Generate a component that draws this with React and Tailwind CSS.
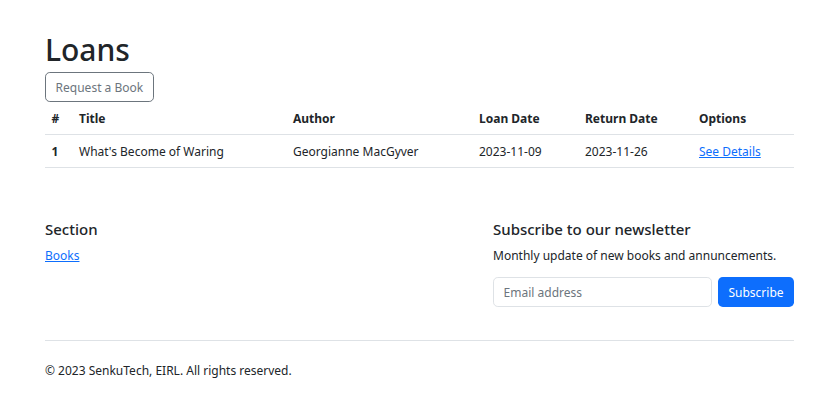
import React from 'react';

const loans = [
  {
    id: 1,
    title: "What's Become of Waring",
    author: 'Georgianne MacGyver',
    loanDate: '2023-11-09',
    returnDate: '2023-11-26'
  }
];

export default function App() {
  return (
    <div className="min-h-screen bg-white text-[#212529] text-[12px] leading-[19.2px]" style={{ fontFamily: '"Segoe UI", "Noto Sans", sans-serif' }}>
      <div className="w-[749px] ml-[45px] pt-[31px]">
        <h1 className="text-[30px] leading-[38.4px] font-medium mb-[3px]">Loans</h1>
        <button className="h-[30px] px-[9.6px] border border-[#6c757d] rounded-[4.8px] text-[#6c757d] bg-white">
          Request a Book
        </button>

        <table className="w-full table-fixed border-collapse mb-[12.8px]">
          <colgroup>
            <col className="w-[27.6px]" />
            <col className="w-[214px]" />
            <col className="w-[186px]" />
            <col className="w-[106px]" />
            <col className="w-[114px]" />
            <col className="w-[101.4px]" />
          </colgroup>
          <thead>
            <tr className="border-b border-[#dee2e6] text-left">
              <th className="px-[6.4px] py-[6.4px] font-bold">#</th>
              <th className="px-[6.4px] py-[6.4px] font-bold">Title</th>
              <th className="px-[6.4px] py-[6.4px] font-bold">Author</th>
              <th className="px-[6.4px] py-[6.4px] font-bold">Loan Date</th>
              <th className="px-[6.4px] py-[6.4px] font-bold">Return Date</th>
              <th className="px-[6.4px] py-[6.4px] font-bold">Options</th>
            </tr>
          </thead>
          <tbody>
            {loans.map((l) => (
              <tr key={l.id} className="border-b border-[#dee2e6]">
                <th className="px-[6.4px] py-[6.4px] font-bold text-left">{l.id}</th>
                <td className="px-[6.4px] py-[6.4px]">{l.title}</td>
                <td className="px-[6.4px] py-[6.4px]">{l.author}</td>
                <td className="px-[6.4px] py-[6.4px]">{l.loanDate}</td>
                <td className="px-[6.4px] py-[6.4px]">{l.returnDate}</td>
                <td className="px-[6.4px] py-[6.4px]">
                  <a href="#" className="text-[#0d6efd] underline">See Details</a>
                </td>
              </tr>
            ))}
          </tbody>
        </table>

        <footer className="pt-[39px]">
          <div className="flex justify-between">
            <div>
              <h5 className="text-[15px] leading-[19.2px] font-medium mb-[6.4px]">Section</h5>
              <a href="#" className="text-[#0d6efd] underline">Books</a>
            </div>
            <form className="w-[301px]" onSubmit={(e) => e.preventDefault()}>
              <h5 className="text-[15px] leading-[19.2px] font-medium mb-[6.4px]">Subscribe to our newsletter</h5>
              <p className="mb-[12px] whitespace-nowrap">Monthly update of new books and annuncements.</p>
              <div className="flex gap-[6px]">
                <input
                  type="text"
                  placeholder="Email address"
                  className="w-[219px] h-[30.5px] px-[9.6px] border border-[#dee2e6] rounded-[4.8px] placeholder-[#6c757d] focus:outline-none"
                />
                <button type="button" className="w-[76px] h-[30.5px] bg-[#0d6efd] text-white rounded-[4.8px]">
                  Subscribe
                </button>
              </div>
            </form>
          </div>

          <div className="mt-[33px] border-t border-[#dee2e6] pt-[19.2px]">
            <p>© 2023 SenkuTech, EIRL. All rights reserved.</p>
          </div>
        </footer>
      </div>
    </div>
  );
}
